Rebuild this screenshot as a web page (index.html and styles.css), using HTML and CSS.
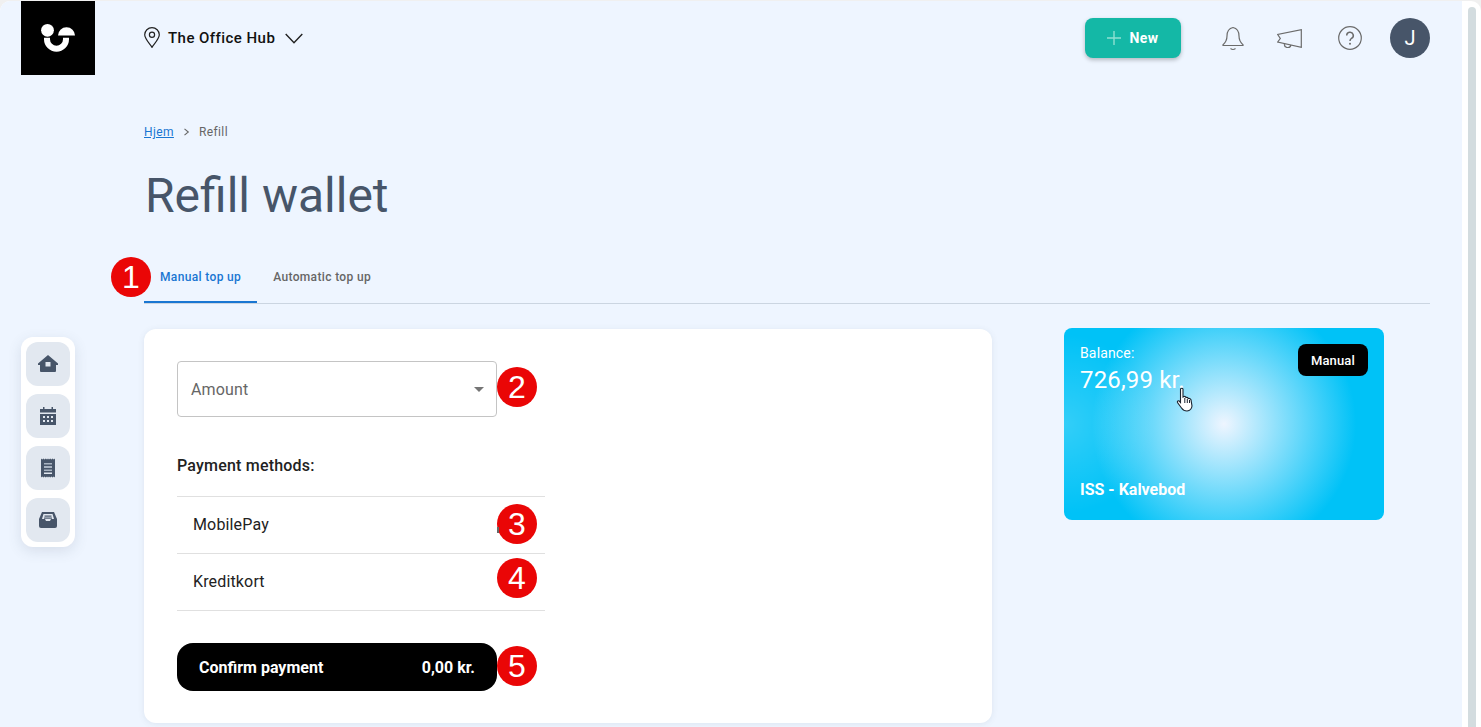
FILE: index.html
```html
<!DOCTYPE html>
<html lang="en">
<head>
    <meta charset="UTF-8">
    <meta name="viewport" content="width=device-width, initial-scale=1.0">
    <title>Refill wallet</title>
    <link rel="stylesheet" href="styles.css">
</head>
<body>

<div class="window">
    <div class="main">
        <aside class="side">
            <a class="logo">
                <svg width="74" height="74" viewBox="21 1 74 74">
                    <circle cx="47.5" cy="30.3" r="6.4" fill="#fff"/>
                    <path d="M58 35.500 a8.500 8.200 0 0 1 17 0 z" fill="#fff"/>
                    <path d="M47 37.700 v1.500 a9.500 9.500 0 0 0 19 0 v-1.500" fill="none" stroke="#fff" stroke-width="6"/>
                </svg>
            </a>
            <nav class="rail">
                <a class="rail-btn">
                    <svg width="20" height="20" viewBox="0 0 20 20"><path d="M10 1 L20 9.500 V11 H18 V17 Q18 18 17 18 H3 Q2 18 2 17 V11 H0 V9.500 Z M7.500 8 V12.500 H12.500 V8 Z" fill="#475569" fill-rule="evenodd"/></svg>
                </a>
                <a class="rail-btn">
                    <svg width="20" height="20" viewBox="0 0 20 20"><path d="M5 1 H6.500 V3 H13.500 V1 H15 V3 H18 V6.500 H2 V3 H5 Z M2 8 H18 V19 H2 Z" fill="#475569"/><g fill="#e2e8f0"><rect x="5" y="10" width="2" height="2"/><rect x="9" y="10" width="2" height="2"/><rect x="13" y="10" width="2" height="2"/><rect x="5" y="14" width="2" height="2"/><rect x="9" y="14" width="2" height="2"/><rect x="13" y="14" width="2" height="2"/></g></svg>
                </a>
                <a class="rail-btn">
                    <svg width="20" height="20" viewBox="0 0 20 20"><path d="M3 .500 L4.200 1.500 L5.400 .500 L6.600 1.500 L7.800 .500 L9 1.500 L10 .500 L11 1.500 L12.200 .500 L13.400 1.500 L14.600 .500 L15.800 1.500 L17 .500 V19.500 L15.800 18.500 L14.600 19.500 L13.400 18.500 L12.200 19.500 L11 18.500 L10 19.500 L9 18.500 L7.800 19.500 L6.600 18.500 L5.400 19.500 L4.200 18.500 L3 19.500 Z" fill="#475569"/><g fill="#a9b4c2"><rect x="6" y="5" width="8" height="1.500"/><rect x="6" y="8" width="8" height="2"/><rect x="6" y="11.500" width="8" height="1.500"/></g><rect x="6" y="14.500" width="8" height="1.500" fill="#e2e8f0"/></svg>
                </a>
                <a class="rail-btn">
                    <svg width="20" height="20" viewBox="0 0 20 20"><path d="M4 2 H16 L19 9 V16 Q19 18 17 18 H3 Q1 18 1 16 V9 Z" fill="#475569"/><path d="M5.500 4 H14.500 L16 9 H13 L12 11 H8 L7 9 H4 Z" fill="#e2e8f0"/><rect x="6.500" y="5.500" width="7" height="1.200" fill="#475569"/><rect x="6" y="7.500" width="8" height="1.200" fill="#475569"/></svg>
                </a>
            </nav>
        </aside>

        <div class="page">
            <header class="topbar">
                <div class="location">
                    <svg width="16" height="21" viewBox="0 0 16 21"><path d="M8 20.300 C5 16 .7 11.500 .7 7.800 A7.300 7.200 0 0 1 15.300 7.800 C15.300 11.500 11 16 8 20.300 Z" fill="none" stroke="#222" stroke-width="1.200"/><circle cx="8" cy="7.800" r="2.600" fill="none" stroke="#222" stroke-width="1.200"/></svg>
                    <span class="location-name">The Office Hub</span>
                    <svg width="18" height="11" viewBox="0 0 18 11"><path d="M.7 1 L9 9.800 L17.300 1" fill="none" stroke="#222" stroke-width="1.400"/></svg>
                </div>
                <div class="actions">
                    <button class="new-btn">
                        <svg width="14" height="14" viewBox="0 0 14 14"><path d="M7 0 V14 M0 7 H14" stroke="#8ee0d2" stroke-width="1.400"/></svg>
                        New
                    </button>
                    <svg class="bell" width="22" height="25" viewBox="0 0 22 25"><path d="M11 1.500 C6.500 2.500 5 6 5 10 C5 14.500 3.500 16.500 1 18.800 V19.500 H21 V18.800 C18.500 16.500 17 14.500 17 10 C17 6 15.500 2.500 11 1.500 Z M8.500 22.500 Q11 24.500 13.500 22.500" fill="none" stroke="#6b6b6b" stroke-width="1.200"/></svg>
                    <svg class="horn" width="25" height="19" viewBox="0 0 25 19"><path d="M24.300 .7 V18.300 L.7 13 L3.300 9.500 L.7 5.500 Z M7.500 14.500 A3.300 3.300 0 0 0 14 16" fill="none" stroke="#6b6b6b" stroke-width="1.200"/></svg>
                    <svg class="help" width="24" height="24" viewBox="0 0 24 24"><circle cx="12" cy="12" r="11.300" fill="none" stroke="#6b6b6b" stroke-width="1.200"/><path d="M8.700 9.500 A3.300 3.200 0 1 1 13.500 12.300 C12.300 13 12 13.500 12 15" fill="none" stroke="#6b6b6b" stroke-width="1.500"/><circle cx="12" cy="17.700" r="1" fill="#6b6b6b"/></svg>
                    <div class="avatar">J</div>
                </div>
            </header>

            <div class="crumbs">
                <a class="crumb-link">Hjem</a>
                <svg width="7" height="8" viewBox="0 0 7 8"><path d="M1.500 .8 L5.300 4 L1.500 7.200" fill="none" stroke="#666" stroke-width="1.100"/></svg>
                <span>Refill</span>
            </div>

            <h1 class="title">Refill wallet</h1>

            <div class="tabs">
                <span class="num num-tab">1</span>
                <a class="tab active">Manual top up</a>
                <a class="tab">Automatic top up</a>
            </div>

            <div class="content">
                <section class="card">
                    <div class="select">
                        <span>Amount</span>
                        <i class="select-arrow"></i>
                        <span class="num num-amount">2</span>
                    </div>

                    <h2 class="methods-title">Payment methods:</h2>
                    <ul class="methods">
                        <li>MobilePay<span class="num num-mobile">3</span></li>
                        <li>Kreditkort<span class="num num-kredit">4</span></li>
                    </ul>

                    <button class="confirm">
                        <span>Confirm payment</span>
                        <span>0,00 kr.</span>
                        <span class="num num-confirm">5</span>
                    </button>
                </section>

                <section class="wallet">
                    <div class="wallet-top">
                        <div>
                            <div class="balance-label">Balance:</div>
                            <div class="balance">726,99 kr.</div>
                        </div>
                        <span class="chip">Manual</span>
                    </div>
                    <div class="wallet-name">ISS - Kalvebod</div>
                    <svg class="cursor" width="18" height="25" viewBox="0 0 17 25"><path d="M4 1.800 Q5.500 .5 6.500 2 V10 L7.500 9.500 Q9 9 9.500 10.500 Q11 10 11.800 11.500 Q13.500 11 14.500 12.800 L15.500 19 Q15 23.500 10.500 24 Q7 24 5 21 L1 15.500 Q.5 13.500 2.500 13.800 L4 15.500 Z" fill="#fff" stroke="#1b2430" stroke-width="1.100"/><path d="M8.300 11 V16 M10.800 12 V16 M13 13 V16" stroke="#1b2430" stroke-width="1" fill="none"/></svg>
                </section>
            </div>
        </div>
    </div>

    <div class="scrollbar"><div class="scroll-thumb"></div></div>
</div>

</body>
</html>
```

FILE: styles.css
```css
* {
    box-sizing: border-box;
}

html, body {
    height: 100%;
}

body {
    margin: 0;
    background: #f0f0f0;
    font-family: 'Roboto', Arial, sans-serif;
    letter-spacing: 0.15px;
    color: #222;
    overflow: hidden;
}

.window {
    display: flex;
    height: 726px;
    margin-top: 1px;
    background: #fff;
    border-radius: 10px 10px 0 0;
    overflow: hidden;
}

.main {
    flex: 1;
    display: flex;
    background: #eef5ff;
    overflow: hidden;
}

.scrollbar {
    width: 19px;
    padding: 6px 5px 0 6px;
}

.scroll-thumb {
    height: 100%;
    background: #d3dcdf;
    border-radius: 4px 4px 0 0;
}

/* left column */
.side {
    width: 144px;
    flex-shrink: 0;
    padding-left: 21px;
}

.logo {
    display: block;
    width: 74px;
    height: 74px;
    background: #000;
}

.logo svg {
    display: block;
}

.rail {
    width: 54px;
    margin-top: 262px;
    padding: 5px;
    display: flex;
    flex-direction: column;
    gap: 8px;
    background: #fff;
    border-radius: 12px;
    box-shadow: 0 4px 14px rgba(71, 85, 105, 0.14);
}

.rail-btn {
    width: 44px;
    height: 44px;
    display: flex;
    align-items: center;
    justify-content: center;
    background: #e2e8f0;
    border-radius: 12px;
}

/* page column */
.page {
    flex: 1;
    padding-right: 32px;
    min-width: 0;
}

.topbar {
    height: 74px;
    display: flex;
    justify-content: space-between;
    padding-top: 17px;
}

.location {
    display: flex;
    align-items: flex-start;
    height: 40px;
}

.location > svg:first-child {
    margin-top: 9px;
}

.location > svg:last-child {
    margin-top: 15px;
    margin-left: 10px;
}

.location-name {
    margin-left: 8px;
    margin-top: 11px;
    font-size: 15px;
    font-weight: 500;
    line-height: 18px;
    letter-spacing: 0.45px;
    color: #111;
}

.actions {
    display: flex;
    align-items: center;
    height: 40px;
}

.new-btn {
    width: 96px;
    height: 40px;
    display: flex;
    align-items: center;
    justify-content: center;
    gap: 8px;
    border: none;
    border-radius: 8px;
    background: #14b8a6;
    color: #fff;
    font-family: inherit;
    font-size: 14px;
    font-weight: 700;
    letter-spacing: 0.5px;
    box-shadow: 0 2px 4px rgba(0, 0, 0, 0.25);
}

.bell {
    margin-left: 41px;
}

.horn {
    margin-left: 33px;
}

.help {
    margin-left: 36px;
}

.avatar {
    width: 40px;
    height: 40px;
    margin-left: 28px;
    display: flex;
    align-items: center;
    justify-content: center;
    border-radius: 50%;
    background: #475569;
    color: #fff;
    font-size: 20px;
}

.crumbs {
    margin-top: 49px;
    height: 16px;
    display: flex;
    align-items: center;
    gap: 9px;
    font-size: 12px;
    letter-spacing: 0.4px;
    color: #666;
}

.crumb-link {
    color: #1976d2;
    text-decoration: underline;
}

.title {
    margin: 28px 0 0 1px;
    font-size: 48px;
    font-weight: 400;
    line-height: 56px;
    letter-spacing: 0;
    color: #475569;
}

.tabs {
    position: relative;
    display: flex;
    margin-top: 31px;
    height: 49px;
    border-bottom: 1px solid #cbd5e1;
}

.tab {
    height: 48px;
    padding: 0 16px 4px;
    display: flex;
    align-items: center;
    font-size: 12px;
    font-weight: 500;
    letter-spacing: 0.35px;
    color: #666;
}

.tab.active {
    color: #1976d2;
    border-bottom: 2px solid #1976d2;
    padding-bottom: 2px;
}

/* numbered callouts */
.num {
    position: absolute;
    width: 40px;
    height: 40px;
    display: flex;
    align-items: center;
    justify-content: center;
    border-radius: 50%;
    background: #ea0606;
    color: #fff;
    font-family: 'Liberation Sans', Arial, sans-serif;
    font-size: 32px;
    font-weight: 400;
    letter-spacing: 0;
}

.num-tab {
    left: -33px;
    top: 2px;
}

.num-amount {
    left: 319px;
    top: 5px;
}

.num-mobile {
    left: 320px;
    top: 7px;
}

.num-kredit {
    left: 320px;
    top: 4px;
}

.num-confirm {
    left: 320px;
    top: 3px;
}

.content {
    display: flex;
    align-items: flex-start;
    margin-top: 25px;
}

.card {
    width: 848px;
    height: 394px;
    padding: 32px 33px;
    background: #fff;
    border-radius: 12px;
    box-shadow: 0 1px 6px rgba(71, 85, 105, 0.1);
}

.select {
    position: relative;
    width: 320px;
    height: 56px;
    padding: 0 13px;
    display: flex;
    align-items: center;
    border: 1px solid #c4c4c4;
    border-radius: 4px;
    font-size: 16px;
    color: #666;
}

.select-arrow {
    position: absolute;
    right: 12px;
    top: 25px;
    border-left: 5px solid transparent;
    border-right: 5px solid transparent;
    border-top: 5px solid #757575;
}

.methods-title {
    margin: 39px 0 0;
    font-size: 16px;
    font-weight: 500;
    line-height: 19px;
    letter-spacing: 0.2px;
    color: #222;
}

.methods {
    list-style: none;
    width: 368px;
    margin: 21px 0 0;
    padding: 0;
    border-top: 1px solid #e0e0e0;
}

.methods li {
    position: relative;
    height: 57px;
    padding: 0 0 2px 16px;
    display: flex;
    align-items: center;
    border-bottom: 1px solid #e0e0e0;
    font-size: 16px;
    color: #222;
}

/* sliver of the logo that shows beside callout 3 */
.methods li:first-child::after {
    content: "";
    position: absolute;
    left: 320px;
    top: 30px;
    width: 2px;
    height: 6px;
    background: #666;
}

.confirm {
    position: relative;
    width: 320px;
    height: 48px;
    margin-top: 32px;
    padding: 0 22px;
    display: flex;
    align-items: center;
    justify-content: space-between;
    border: none;
    border-radius: 16px;
    background: #000;
    color: #fff;
    font-family: inherit;
    font-size: 16px;
    font-weight: 700;
}

.wallet {
    position: relative;
    width: 320px;
    height: 192px;
    margin-left: 72px;
    margin-top: -1px;
    padding: 16px 16px 20px;
    display: flex;
    flex-direction: column;
    justify-content: space-between;
    border-radius: 8px;
    color: #fff;
    background:
        radial-gradient(circle 90px at 0% 50%, rgba(255, 255, 255, 0.2), rgba(255, 255, 255, 0)),
        radial-gradient(circle 132px at 50% 50%, #eef5ff 0%, #00c2f7 100%);
}

.wallet-top {
    display: flex;
    justify-content: space-between;
    align-items: flex-start;
}

.balance-label {
    font-size: 14px;
    line-height: 18px;
}

.balance {
    margin-top: 2px;
    font-size: 24px;
    line-height: 32px;
}

.chip {
    padding: 0 13px;
    height: 32px;
    display: flex;
    align-items: center;
    border-radius: 8px;
    background: #000;
    font-size: 13px;
    font-weight: 500;
}

.wallet-name {
    font-size: 16px;
    font-weight: 700;
    line-height: 20px;
    letter-spacing: 0;
}

.cursor {
    position: absolute;
    left: 112px;
    top: 59px;
}
```
